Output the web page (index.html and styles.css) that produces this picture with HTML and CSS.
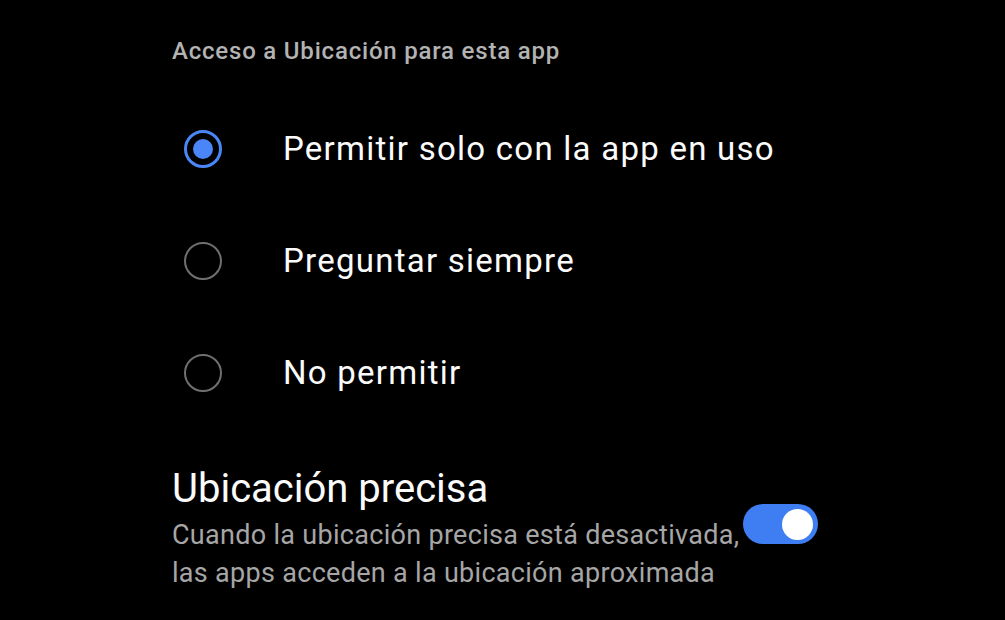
FILE: index.html
```html
<!DOCTYPE html>
<html lang="es">
<head>
<meta charset="utf-8">
<title>Ubicación</title>
<link rel="stylesheet" href="styles.css">
</head>
<body>
<main class="screen">
  <h2 class="section-title">Acceso a Ubicación para esta app</h2>
  <ul class="options">
    <li class="option">
      <span class="radio radio-on"><span class="radio-dot"></span></span>
      <span class="option-label">Permitir solo con la app en uso</span>
    </li>
    <li class="option">
      <span class="radio"></span>
      <span class="option-label">Preguntar siempre</span>
    </li>
    <li class="option">
      <span class="radio"></span>
      <span class="option-label">No permitir</span>
    </li>
  </ul>
  <section class="precise">
    <div class="precise-text">
      <h3 class="precise-title">Ubicación precisa</h3>
      <p class="precise-desc">Cuando la ubicación precisa está desactivada,<br>las apps acceden a la ubicación aproximada</p>
    </div>
    <span class="toggle"><span class="knob"></span></span>
  </section>
</main>
</body>
</html>
```
FILE: styles.css
```css
html, body {
  margin: 0;
  padding: 0;
  background: #000;
}
body {
  width: 1005px;
  height: 620px;
  overflow: hidden;
  font-family: Roboto, "Noto Sans", "Liberation Sans", sans-serif;
  color: #fff;
}
.screen {
  padding: 36px 0 0 172px;
}
.section-title {
  margin: 0;
  font-size: 24px;
  font-weight: 500;
  letter-spacing: 0.8px;
  line-height: 30px;
  color: #b3b3b3;
}
.options {
  list-style: none;
  margin: 0;
  padding: 0;
  margin-top: 45px;
}
.option {
  display: flex;
  align-items: center;
  height: 76px;
  margin-top: 36px;
}
.option:first-child {
  margin-top: 0;
}
.radio {
  box-sizing: border-box;
  width: 38px;
  height: 38px;
  margin-left: 12px;
  border: 2.5px solid #6f6f6f;
  border-radius: 50%;
  display: flex;
  align-items: center;
  justify-content: center;
  flex: none;
}
.radio-on {
  border: 3.5px solid #4a86f7;
}
.radio-dot {
  width: 20px;
  height: 20px;
  border-radius: 50%;
  background: #4a86f7;
}
.option-label {
  margin-left: 61px;
  font-size: 33px;
  letter-spacing: 1.25px;
  line-height: 40px;
  color: #fbfbfb;
}
.precise {
  display: flex;
  align-items: center;
  margin-top: 53px;
}
.precise-text {
  flex: none;
  width: 570px;
}
.precise-title {
  margin: 0;
  font-size: 40px;
  font-weight: 400;
  line-height: 50px;
  color: #fbfbfb;
}
.precise-desc {
  margin: 2px 0 0;
  font-size: 27px;
  letter-spacing: 0.3px;
  line-height: 38px;
  color: #a6a6a6;
  white-space: nowrap;
}
.toggle {
  box-sizing: border-box;
  width: 75px;
  height: 40px;
  margin-left: 1px;
  margin-bottom: 8px;
  border-radius: 20px;
  background: #3f7ef2;
  display: flex;
  align-items: center;
  justify-content: flex-end;
  padding-right: 5px;
  flex: none;
}
.knob {
  width: 31px;
  height: 31px;
  border-radius: 50%;
  background: #fff;
}
```
